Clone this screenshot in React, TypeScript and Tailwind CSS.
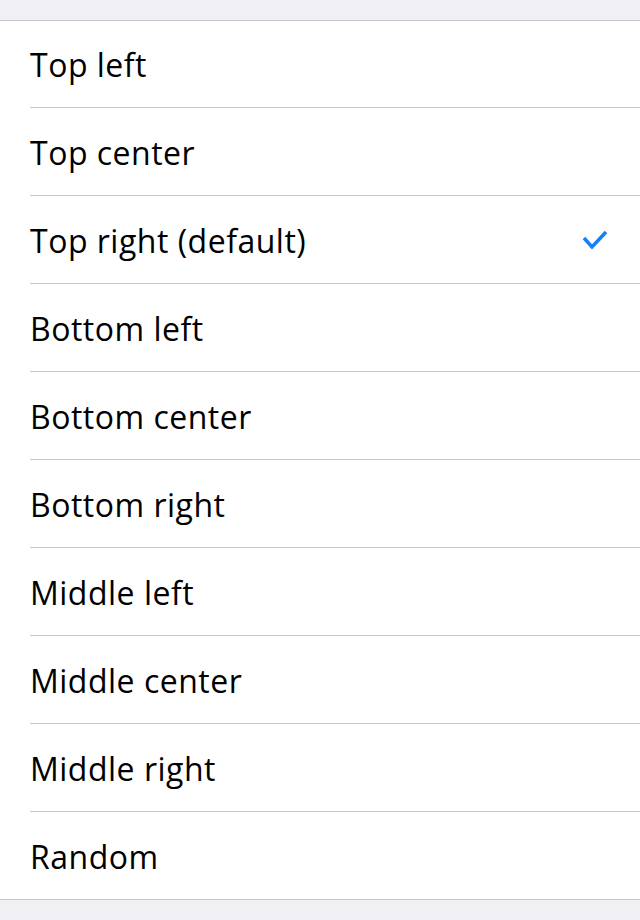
import React from "react";

const items = [
  "Top left",
  "Top center",
  "Top right (default)",
  "Bottom left",
  "Bottom center",
  "Bottom right",
  "Middle left",
  "Middle center",
  "Middle right",
  "Random",
];

export default function App() {
  return (
    <div className="w-[640px] h-[920px] bg-[#efeff4] overflow-hidden" style={{ fontFamily: '"Open Sans", "Noto Sans", sans-serif' }}>
      <div className="h-[20px]" />
      <div className="bg-white border-t border-b border-[#c8c7cc]">
        {items.map((label, i) => {
          const first = i === 0;
          const last = i === items.length - 1;
          return (
            <div key={label} className="pl-[30px]">
              <div
                className={
                  "flex items-center justify-between pr-[30px] " +
                  (last ? "h-[87px]" : first ? "h-[87px] border-b border-[#c8c7cc]" : "h-[88px] border-b border-[#c8c7cc]")
                }
              >
                <span className="text-[32px] leading-none text-black tracking-[0.5px] pt-[2px]">{label}</span>
                {label === "Top right (default)" && (
                  <svg width="28" height="22" viewBox="0 0 28 22" className="mr-[1px]">
                    <polyline
                      points="3,9 11,18 25,3"
                      fill="none"
                      stroke="#157efb"
                      strokeWidth="3.5"
                      strokeLinecap="butt"
                      strokeLinejoin="miter"
                    />
                  </svg>
                )}
              </div>
            </div>
          );
        })}
      </div>
    </div>
  );
}
